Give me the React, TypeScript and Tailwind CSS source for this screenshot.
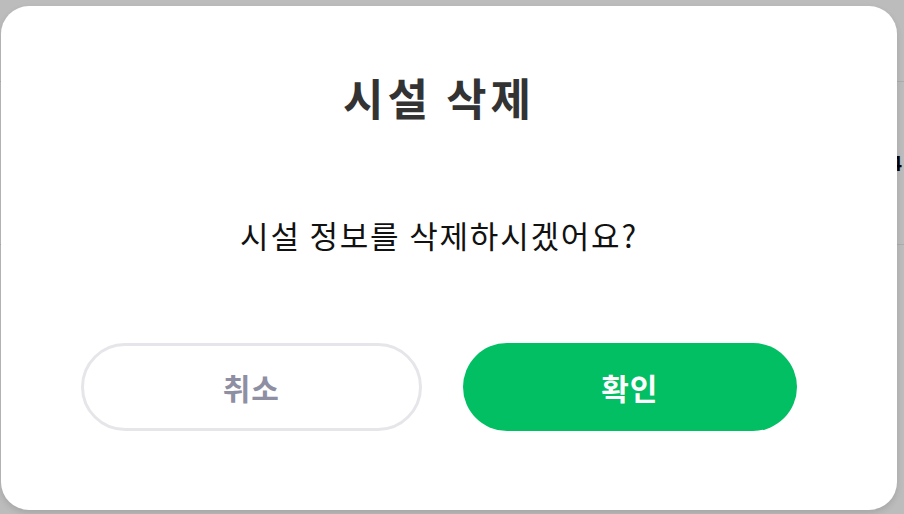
export default function App() {
  return (
    <div
      className="relative h-screen w-full overflow-hidden bg-[#bcbcbc]"
      style={{ fontFamily: '"Noto Sans CJK KR", "Noto Sans", sans-serif' }}
    >
      {/* page behind the dimmed overlay */}
      <div className="flex flex-col">
        <div className="h-[82px] border-b border-[#acacac]" />
        <div className="flex h-[163px] items-center justify-end border-b border-[#acacac] pr-[2px]">
          <span className="text-[20px] font-bold leading-none text-black">4</span>
        </div>
      </div>

      <div className="absolute left-[1px] top-[6px] flex h-[504px] w-[896px] flex-col rounded-[28px] bg-white pl-[80px] pr-[100px] shadow-[0_3px_6px_rgba(0,0,0,0.12)]">
        <h1 className="mt-[69px] text-center text-[44px] font-bold leading-none tracking-[4px] text-[#333333]">
          시설 삭제
        </h1>
        <p className="mt-[100px] text-center text-[31px] leading-none tracking-[1.8px] text-[#111111]">
          시설 정보를 삭제하시겠어요?
        </p>
        <div className="mt-[93px] flex gap-[41px]">
          <button className="flex h-[88px] flex-1 items-center justify-center rounded-full border-[3px] border-[#e6e6ea] bg-white text-[30px] font-bold tracking-[1px] text-[#8f8fa3]">
            취소
          </button>
          <button className="flex h-[88px] flex-1 items-center justify-center rounded-full bg-[#02bf63] text-[30px] font-bold tracking-[1px] text-white">
            확인
          </button>
        </div>
      </div>
    </div>
  );
}
